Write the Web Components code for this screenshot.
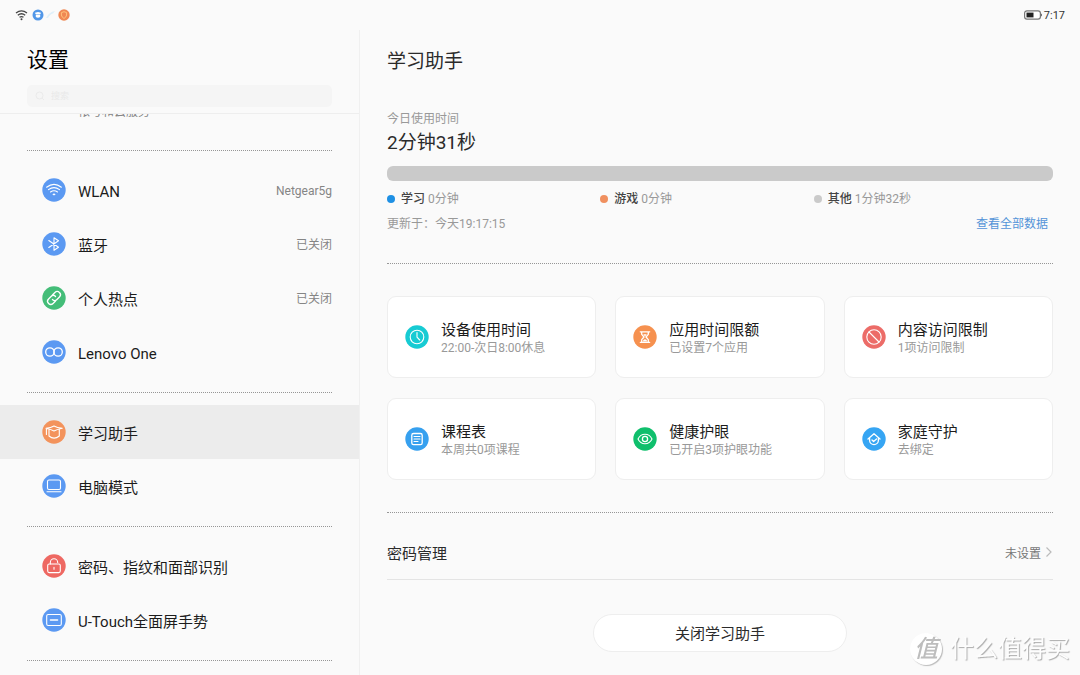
<!DOCTYPE html>
<html lang="zh-CN">
<head>
<meta charset="utf-8">
<title>设置</title>
<style>
html, body { margin: 0; min-height: 100vh; background: #fafafa; }
body { font-family: Roboto, "Noto Sans CJK SC", sans-serif; color: #1c1c1c; font-size: 15px; overflow: hidden; }
</style>
</head>
<body>
<settings-app></settings-app>
<script>
const define = (name, html, setup) => {
  const template = document.createElement('template');
  template.innerHTML = html;
  customElements.define(name, class extends HTMLElement {
    constructor() {
      super();
      this.attachShadow({ mode: 'open' }).append(template.content.cloneNode(true));
    }
    connectedCallback() { if (setup) setup(this, this.shadowRoot); }
  });
};

const icons = {
  wifi: ['#5b99f2', '<path d="M4.600 9.200Q12 3.600 19.400 9.200M6.500 11.600Q12 7.600 17.500 11.600M8.500 14Q12 11.600 15.500 14"/><path d="M10.300 16.200Q12 15 13.700 16.200L12 17.600Z" fill="#fff" stroke="none"/>'],
  bluetooth: ['#5b99f2', '<path d="M6.800 8.500L16.500 15.200L12 18.300V5.700L16.500 8.800L6.800 15.500"/>'],
  link: ['#44bd78', '<g transform="rotate(-45 12 12)" stroke-width="1.300"><path d="M11 15.200H7.500A3.200 3.200 0 0 1 7.500 8.800H11A3.200 3.200 0 0 1 14.200 12M13 8.800H16.500A3.200 3.200 0 0 1 16.500 15.200H13A3.200 3.200 0 0 1 9.800 12"/></g>'],
  infinity: ['#5b99f2', '<circle cx="7.900" cy="12" r="4.200" stroke-width="1.300"/><circle cx="16.100" cy="12" r="4.200" stroke-width="1.300"/>'],
  cap: ['#f3935c', '<path d="M4 8.300Q9 7.800 12 6Q15 7.800 20.300 8.300Q15.500 9.200 12 11Q8.500 9.200 4 8.300ZM7 9.500V16Q12 20.200 17.300 16V9.500M4.400 9V14.500"/>'],
  laptop: ['#5b99f2', '<rect x="5.500" y="6" width="13" height="9.500" rx="1.500"/><path d="M5 17.800H19"/>'],
  lock: ['#ee6862', '<rect x="5.700" y="10" width="12.600" height="8.600" rx="1.500"/><path d="M8.300 10V8.500A3.700 3.700 0 0 1 15.700 8.500M12 13.300V15.300"/>'],
  gesture: ['#5b99f2', '<rect x="4.700" y="6.500" width="14.600" height="11" rx="1.500"/><path d="M8.500 12H15.500" stroke-width="1.600"/>'],
  clock: ['#17cbd3', '<circle cx="12" cy="12" r="6.800"/><path d="M12 7.500V12.200L14.700 15"/>'],
  hourglass: ['#f6914f', '<path d="M7.300 6.800H16.700M7.300 17.300H16.700M8.700 7V9.300L11 12L8.700 14.700V17M15.300 7V9.300L13 12L15.300 14.700V17" stroke-width="1.300"/><path d="M9.500 16.500Q12 12 14.500 16.500ZM10.200 9.300H13.800L12 11.500Z" fill="#fff" stroke="none"/>'],
  ban: ['#ec6c68', '<circle cx="12" cy="12" r="7.200"/><path d="M7 7L17 17"/>'],
  book: ['#36a0ef', '<rect x="6.800" y="6.500" width="10.400" height="11.200" rx="1.800" stroke-width="1.300"/><path d="M9 9.500H15M9 12H15M9 14.500H13"/>'],
  eye: ['#0fbf6c', '<path d="M5 12C8 5.600 16 5.600 19 12C16 18.400 8 18.400 5 12Z"/><circle cx="12" cy="12" r="2.600" stroke-width="1.300"/>'],
  home: ['#36a5f3', '<path d="M6 12L12 6.700L18 12M7.600 10.800V13.300A4.400 4.400 0 0 0 16.400 13.300V10.800M10 13L11.600 14.500L14.500 12" stroke-width="1.300"/>']
};

define('round-icon', `
<style>
:host { display: block; flex: none; width: 24px; height: 24px; }
svg { display: block; width: 100%; height: 100%; fill: none; stroke: #fff; stroke-width: 1.100; stroke-linecap: round; stroke-linejoin: round; }
</style>
<svg viewBox="0 0 24 24" aria-hidden="true"></svg>`, (host, root) => {
  const entry = icons[host.getAttribute('name')];
  if (!entry) return;
  root.querySelector('svg').innerHTML = `<circle cx="12" cy="12" r="11.700" fill="${entry[0]}" stroke="none"/>${entry[1]}`;
});

// Puts the round icon named by the host's "icon" attribute in front of its label.
const addIcon = (host, root) => {
  const icon = document.createElement('round-icon');
  icon.setAttribute('name', host.getAttribute('icon'));
  root.querySelector('a, button').prepend(icon);
};

define('dotted-rule', `
<style>:host { display: block; border-top: 1px dotted #969696; }</style>`);

define('status-bar', `
<style>
:host { display: flex; align-items: center; justify-content: space-between; height: 30px; padding: 0 15px; font-size: 11px; color: #333; }
div { display: flex; align-items: center; gap: 2px; }
svg { display: block; }
</style>
<div>
  <svg width="15" height="12" viewBox="0 0 15 12" fill="none" stroke="#444" stroke-width="1.300"><path d="M1 4Q6.500-.2 12 4M2.800 6.200Q6.500 3.300 10.200 6.200M4.500 8.300Q6.500 6.800 8.500 8.300"/><circle cx="6.500" cy="10.300" r="1" fill="#444" stroke="none"/></svg>
  <svg width="12" height="12" viewBox="0 0 12 12"><circle cx="6" cy="6" r="5.500" fill="#5197e8"/><path d="M3 3.800L6 3L9 3.800L8.500 5H3.500ZM3.800 5.500H8.200V8Q6 9.300 3.800 8Z" fill="#fff"/></svg>
  <svg width="10" height="12" viewBox="0 0 10 12"><path d="M0 9Q3 3 9 2L7 4.500Q4 5 2 9Z" fill="#dff0fa"/></svg>
  <svg width="12" height="12" viewBox="0 0 12 12"><circle cx="6" cy="6" r="5.700" fill="#ef8854"/><path d="M6 2.700L8.600 3.600V6Q8.400 8 6 9.500Q3.600 8 3.400 6V3.600Z" fill="none" stroke="#ffc27a"/></svg>
</div>
<div>
  <svg width="18" height="10" viewBox="0 0 18 10"><rect x=".6" y=".8" width="15.800" height="8.400" rx="2.400" fill="#fff" stroke="#777" stroke-width="1.200"/><rect x="2.500" y="2.600" width="7" height="4.800" fill="#222"/><path d="M17.500 3.800V6.200" stroke="#777"/></svg>
  <span>7:17</span>
</div>`);

define('search-field', `
<style>
:host { display: block; }
label { display: flex; align-items: center; gap: 6px; height: 22px; padding: 0 8px; border-radius: 5px; background: #f5f5f5; }
svg { flex: none; }
input { flex: 1; min-width: 0; border: 0; padding: 0; background: none; outline: 0; font: inherit; font-size: 9px; }
input::placeholder { color: #e9e9e9; }
</style>
<label><svg width="10" height="10" viewBox="0 0 10 10" fill="none" stroke="#ebebeb"><circle cx="4.500" cy="4.500" r="3.500"/><path d="M7 7L9 9"/></svg>
<input type="search" placeholder="搜索" aria-label="搜索"></label>`);

define('nav-item', `
<style>
:host { display: block; }
:host([selected]) { background: #ececec; }
a { display: flex; align-items: center; gap: 12px; height: 54px; padding: 0 27px 0 42px; color: inherit; text-decoration: none; }
.label, .value { line-height: 20px; white-space: nowrap; }
.label { flex: 1; padding-top: 4px; }
.value { padding-top: 2px; font-size: 12px; color: #858585; }
</style>
<a href="#"><span class="label"><slot></slot></span><span class="value"><slot name="value"></slot></span></a>`, addIcon);

define('nav-group', `
<style>:host { display: block; } div { padding: 12px 0 13px; } dotted-rule { margin: 0 27px; }</style>
<div><slot></slot></div><dotted-rule></dotted-rule>`);

define('settings-nav', `
<style>
:host { display: block; border-right: 1px solid #f0f0f0; overflow: hidden; }
header { padding: 15px 27px 6px; border-bottom: 1px solid #eee; }
h1 { margin: 0 0 10px; font-size: 21px; font-weight: 400; line-height: 30px; color: #000; }
.scrolled { display: flex; flex-direction: column; justify-content: flex-end; height: 36px; overflow: hidden; }
.scrolled span { padding: 0 27px 29px 78px; font-size: 12px; line-height: 18px; color: #858585; }
dotted-rule { margin: 0 27px; }
</style>
<header><h1>设置</h1><search-field></search-field></header>
<nav>
  <div class="scrolled"><span>帐号和云服务</span></div>
  <dotted-rule></dotted-rule>
  <nav-group>
    <nav-item icon="wifi">WLAN<span slot="value">Netgear5g</span></nav-item>
    <nav-item icon="bluetooth">蓝牙<span slot="value">已关闭</span></nav-item>
    <nav-item icon="link">个人热点<span slot="value">已关闭</span></nav-item>
    <nav-item icon="infinity">Lenovo One</nav-item>
  </nav-group>
  <nav-group>
    <nav-item icon="cap" selected>学习助手</nav-item>
    <nav-item icon="laptop">电脑模式</nav-item>
  </nav-group>
  <nav-group>
    <nav-item icon="lock">密码、指纹和面部识别</nav-item>
    <nav-item icon="gesture">U-Touch全面屏手势</nav-item>
  </nav-group>
</nav>`);

define('legend-item', `
<style>
:host { display: flex; align-items: center; gap: 6px; white-space: nowrap; color: #999; }
i { width: 8px; height: 8px; border-radius: 50%; background: var(--dot); }
b { font-weight: 500; color: #444; }
</style>
<i></i><span><b><slot></slot></b> <slot name="time"></slot></span>`);

define('usage-summary', `
<style>
:host { display: block; font-size: 12px; line-height: 18px; color: #999; }
.total { margin: 1px 0 9px; font-size: 19px; line-height: 28px; color: #2b2b2b; }
.bar { height: 15px; border-radius: 6px; background: #cacaca; }
.legend { display: grid; grid-template-columns: repeat(3, 1fr); padding-right: 26px; margin: 9px 0 7px; }
.foot { display: flex; justify-content: space-between; padding-right: 5px; }
a { color: #5494d8; text-decoration: none; }
</style>
<div>今日使用时间</div>
<div class="total">2分钟31秒</div>
<div class="bar" role="img" aria-label="今日使用时间"></div>
<div class="legend">
  <legend-item style="--dot:#1e90e4">学习<span slot="time">0分钟</span></legend-item>
  <legend-item style="--dot:#f0905f">游戏<span slot="time">0分钟</span></legend-item>
  <legend-item style="--dot:#cacaca">其他<span slot="time">1分钟32秒</span></legend-item>
</div>
<div class="foot"><span>更新于：今天19:17:15</span><a href="#">查看全部数据</a></div>`);

define('feature-card', `
<style>
:host { display: block; }
button { display: flex; align-items: center; gap: 12px; width: 100%; height: 82px; padding: 0 17px; border: 1px solid #eee; border-radius: 9px; background: #fff; font: inherit; color: inherit; text-align: left; }
.text { display: flex; flex-direction: column; padding-top: 2px; white-space: nowrap; }
.title { line-height: 20px; }
.note { font-size: 12px; line-height: 16px; color: #999; }
</style>
<button type="button"><span class="text"><span class="title"><slot></slot></span><span class="note"><slot name="note"></slot></span></span></button>`, addIcon);

define('link-row', `
<style>
:host { display: block; border-bottom: 1px solid #e4e4e4; }
a { display: flex; align-items: center; gap: 4px; height: 54px; padding-top: 12px; color: #2b2b2b; text-decoration: none; }
.label { flex: 1; }
.value { font-size: 12px; color: #777; }
</style>
<a href="#"><span class="label"><slot></slot></span><span class="value"><slot name="value"></slot></span>
<svg width="8" height="12" viewBox="0 0 8 12" fill="none" stroke="#bbb" stroke-width="1.200" aria-hidden="true"><path d="M1.500 1.500L6 6L1.500 10.500"/></svg></a>`);

define('pill-button', `
<style>
:host { display: block; text-align: center; }
button { width: 38%; height: 38px; padding: 0 0 2px; border: 1px solid #eee; border-radius: 19px; background: #fff; font: inherit; color: #2b2b2b; }
</style>
<button type="button"><slot></slot></button>`);

define('study-panel', `
<style>
:host { display: block; padding: 18px 27px 24px; min-width: 0; }
h2 { margin: 0 0 34px; font-size: 19px; font-weight: 400; line-height: 28px; color: #2b2b2b; }
usage-summary { margin-bottom: 30px; }
.cards { display: grid; grid-template-columns: repeat(3, 1fr); gap: 20px 19px; margin: 32px 0; }
pill-button { margin-top: 34px; }
</style>
<h2>学习助手</h2>
<usage-summary></usage-summary>
<dotted-rule></dotted-rule>
<div class="cards">
  <feature-card icon="clock">设备使用时间<span slot="note">22:00-次日8:00休息</span></feature-card>
  <feature-card icon="hourglass">应用时间限额<span slot="note">已设置7个应用</span></feature-card>
  <feature-card icon="ban">内容访问限制<span slot="note">1项访问限制</span></feature-card>
  <feature-card icon="book">课程表<span slot="note">本周共0项课程</span></feature-card>
  <feature-card icon="eye">健康护眼<span slot="note">已开启3项护眼功能</span></feature-card>
  <feature-card icon="home">家庭守护<span slot="note">去绑定</span></feature-card>
</div>
<dotted-rule></dotted-rule>
<link-row>密码管理<span slot="value">未设置</span></link-row>
<pill-button>关闭学习助手</pill-button>`);

define('site-mark', `
<style>
:host { position: fixed; right: 10px; bottom: 10px; display: flex; align-items: center; gap: 8px; pointer-events: none; font-size: 24px; line-height: 32px; color: #fdfdfd; text-shadow: 1px 1px 1px #aaa; }
.seal { width: 32px; height: 32px; border-radius: 50%; background: #fff; box-shadow: 1px 1px 1px #bbb; text-align: center; font-weight: 500; color: #bdbdbd; text-shadow: none; }
.seal span { font-style: italic; }
</style>
<span class="seal"><span>值</span></span><span>什么值得买</span>`);

define('settings-app', `
<style>
:host { display: block; }
main { display: grid; grid-template-columns: 1fr 2fr; min-height: calc(100vh - 30px); }
</style>
<status-bar></status-bar>
<main><settings-nav></settings-nav><study-panel></study-panel></main>
<site-mark></site-mark>`);
</script>
</body>
</html>
